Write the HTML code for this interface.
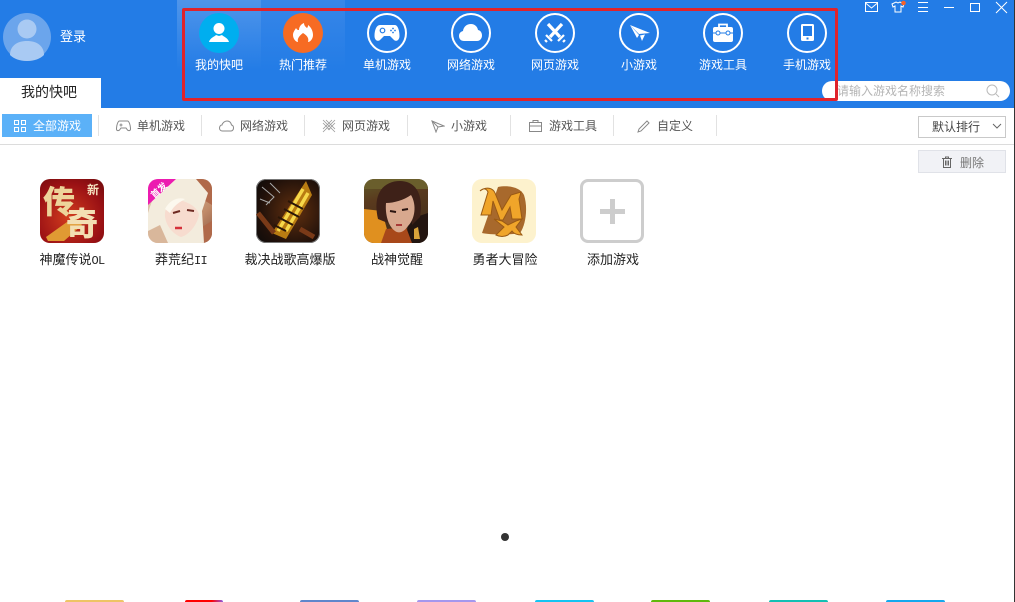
<!DOCTYPE html>
<html lang="zh"><head><meta charset="utf-8"><title>我的快吧</title>
<style>
html,body{margin:0;padding:0;width:1015px;height:602px;overflow:hidden;background:#fff}
body{position:relative;font-family:"Liberation Sans","Noto Sans CJK SC",sans-serif;font-size:12px}
.a{position:absolute}
.lb{position:absolute;top:57px;width:84px;text-align:center;color:#fff;font-size:12px;line-height:16px}
.c{position:absolute;top:13px;width:36px;height:36px;border:2px solid #fff;border-radius:50%}
.c svg{position:absolute;left:0;top:0}
.t{position:absolute;top:118px;font-size:12px;line-height:16px;color:#555}
.s{position:absolute;top:115px;width:1px;height:21px;background:#e2e2e2}
.i{position:absolute;top:118px}
.g{position:absolute;top:179px;width:64px;height:64px;border-radius:10px;overflow:hidden}
.n{position:absolute;top:251px;width:108px;text-align:center;font-size:13px;line-height:16px;color:#222;font-family:"WenQuanYi Zen Hei","Noto Sans CJK SC",sans-serif}
.n span{font-family:"Liberation Mono",monospace;font-size:12px;letter-spacing:-.7px}
.b{position:absolute;top:600px;height:2px;border-radius:3px 3px 0 0}
</style></head><body>
<div class="a" style="left:0;top:0;width:1015px;height:108px;background:#237ce6"></div>
<div class="a" style="left:177px;top:0;width:84px;height:70px;background:linear-gradient(#4f95ea,#237ce6)"></div>
<div class="a" style="left:261px;top:0;width:84px;height:70px;background:linear-gradient(#3786e8,#237ce6)"></div>

<!-- avatar -->
<svg class="a" style="left:3px;top:13px" width="48" height="48" viewBox="0 0 48 48"><circle cx="24" cy="24" r="24" fill="#6ba5ec"/><circle cx="24" cy="16" r="9.500" fill="#a9caf3"/><path d="M7 42c0-9 7-14 17-14s17 5 17 14c-4 4-10 6-17 6s-13-2-17-6z" fill="#a9caf3"/></svg>
<div class="a" style="left:60px;top:28px;color:#fff;font-size:13px;line-height:17px">登录</div>

<!-- tab -->
<div class="a" style="left:0;top:78px;width:101px;height:30px;background:#fff"></div>
<div class="a" style="left:21px;top:83px;font-size:14px;line-height:18px;color:#222">我的快吧</div>

<!-- nav icons -->
<div class="a" style="left:199px;top:13px;width:40px;height:40px;border-radius:50%;background:#00aeef"><svg width="40" height="40" viewBox="0 0 40 40"><circle cx="20" cy="15.500" r="5.500" fill="#fff"/><path d="M10 29c1-4 5-5 7-7l3 1 3-1c2 2 6 3 7 7z" fill="#fff"/></svg></div>
<div class="a" style="left:283px;top:13px;width:40px;height:40px;border-radius:50%;background:#f76b23"><svg width="40" height="40" viewBox="0 0 40 40"><path d="M21 10c0 3 2 4 3 5 1-1 1-2 1-3 3 2 5 6 5 10 0 4-3 7-5 7 1-3 0-6-5-9-4 3-6 6-5 9-2 0-5-3-5-7 0-3 2-5 3-7 1 2 2 2 3 2 0-3 2-6 5-7z" fill="#fff"/></svg></div>

<div class="c" style="left:367px"><svg width="36" height="36" viewBox="0 0 36 36"><path d="M11 10h15c2.500 0 4.500 5 4.500 11 0 4-3 6-5.500 4l-4-4h-6l-4 4c-2.500 2-5.500 0-5.500-4 0-6 2-11 5.500-11z" fill="#fff"/><circle cx="13.500" cy="15.500" r="2.300" fill="none" stroke="#237ce6" stroke-width="1.200"/><circle cx="24" cy="13.500" r=".9" fill="#237ce6"/><circle cx="24" cy="17.500" r=".9" fill="#237ce6"/><circle cx="22" cy="15.500" r=".9" fill="#237ce6"/><circle cx="26" cy="15.500" r=".9" fill="#237ce6"/></svg></div>
<div class="c" style="left:451px"><svg width="36" height="36" viewBox="0 0 36 36"><path d="M11 26c-3 0-5-2-5-5s2-4.500 4-5c.5-4 3.500-7 8-7 4 0 6.500 3 7 6 2.500.5 4 2.500 4 5.500s-2 5.500-5 5.500z" fill="#fff"/></svg></div>
<div class="c" style="left:535px"><svg width="36" height="36" viewBox="0 0 36 36"><path d="M11 9l12 13M25 9L13 22" stroke="#fff" stroke-width="3.200" fill="none"/><path d="M9 20l6 6M27 20l-6 6M8 25l2 2M28 25l-2 2" stroke="#fff" stroke-width="2.200"/></svg></div>
<div class="c" style="left:619px"><svg width="36" height="36" viewBox="0 0 36 36"><path d="M9 10l20 8-11 1z" fill="#fff"/><path d="M9 10l7 13 2-3z" fill="#fff"/><path d="M19 20.500l2 5.500 3-6.500z" fill="#fff"/></svg></div>
<div class="c" style="left:703px"><svg width="36" height="36" viewBox="0 0 36 36"><path d="M14 12V9.500h8V12" fill="none" stroke="#fff" stroke-width="1.800"/><rect x="8" y="12" width="20" height="15" rx="2" fill="#fff"/><path d="M8 18h20" stroke="#237ce6" stroke-width="1"/><circle cx="13" cy="18" r="2" fill="#fff" stroke="#237ce6"/><circle cx="23" cy="18" r="2" fill="#fff" stroke="#237ce6"/></svg></div>
<div class="c" style="left:787px"><svg width="36" height="36" viewBox="0 0 36 36"><rect x="12" y="9" width="13" height="17" rx="1.500" fill="#fff"/><rect x="14" y="11" width="9" height="10" fill="#237ce6"/><rect x="17.500" y="22.500" width="2" height="2" fill="#237ce6"/></svg></div>

<div class="lb" style="left:177px">我的快吧</div>
<div class="lb" style="left:261px">热门推荐</div>
<div class="lb" style="left:345px">单机游戏</div>
<div class="lb" style="left:429px">网络游戏</div>
<div class="lb" style="left:513px">网页游戏</div>
<div class="lb" style="left:597px">小游戏</div>
<div class="lb" style="left:681px">游戏工具</div>
<div class="lb" style="left:765px">手机游戏</div>

<!-- window controls -->
<svg class="a" style="left:860px;top:0" width="155" height="16" viewBox="0 0 155 16" fill="none" stroke="#fff" stroke-width="1">
<rect x="5.500" y="2.500" width="12" height="9"/><path d="M5.500 3l6 5 6-5"/>
<path d="M32 4l4-2 2 1 2-1 4 2-1 3-2-1v6h-6V6l-2 1z"/>
<circle cx="43.500" cy="3" r="2.300" fill="#f4622a" stroke="none"/>
<path d="M58 2.500h10M58 7.500h10M58 11.500h10"/>
<path d="M84 7.500h10"/>
<rect x="110.500" y="3.500" width="9" height="8"/>
<path d="M136 2l11 11M147 2l-11 11"/>
</svg>

<!-- search -->
<div class="a" style="left:822px;top:81px;width:188px;height:20px;border-radius:10px;background:#fff"></div>
<div class="a" style="left:837px;top:83px;color:#b5b5b5;font-size:12px;line-height:16px">请输入游戏名称搜索</div>
<svg class="a" style="left:986px;top:84px" width="14" height="14" viewBox="0 0 14 14" fill="none" stroke="#bbb"><circle cx="6" cy="6" r="5"/><path d="M10 10l3 3"/></svg>

<!-- red annotation -->
<div class="a" style="left:182px;top:8px;width:650px;height:87px;border:3px solid #e0232b;border-radius:2px"></div>

<!-- toolbar -->
<div class="a" style="left:2px;top:114px;width:90px;height:23px;background:#5bb1f8"></div>
<svg class="a" style="left:14px;top:120px" width="12" height="12" viewBox="0 0 12 12" fill="none" stroke="#fff"><rect x=".5" y=".5" width="4" height="4"/><rect x="7.500" y=".5" width="4" height="4"/><rect x=".5" y="7.500" width="4" height="4"/><rect x="7.500" y="7.500" width="4" height="4"/></svg>
<div class="t" style="left:33px;color:#fff">全部游戏</div>
<div class="s" style="left:98px"></div>
<svg class="i" style="left:116px;top:120px" width="15" height="12" viewBox="0 0 15 12" fill="none" stroke="#888"><path d="M3.500 1h8c1.500 0 3 4 3 8 0 2-2 2-3 1l-1.500-2H5L3.500 10c-1 1-3 1-3-1 0-4 1.500-8 3-8z"/><path d="M3.500 5h3M5 3.500v3"/></svg>
<div class="t" style="left:137px">单机游戏</div>
<div class="s" style="left:201px"></div>
<svg class="i" style="left:219px;top:120px" width="15" height="12" viewBox="0 0 15 12" fill="none" stroke="#888"><path d="M3.500 11C1.500 11 .5 9.500.5 8s1-3 2.500-3C3.500 3 5.500 1 8 1c2.500 0 4 1.500 4.500 4 1.200.2 2 1.500 2 3s-1 3-2.500 3z"/></svg>
<div class="t" style="left:240px">网络游戏</div>
<div class="s" style="left:304px"></div>
<svg class="i" style="left:322px;top:119px" width="14" height="14" viewBox="0 0 14 14" fill="none" stroke="#999" stroke-width=".8"><path d="M1 1l12 12M13 1L1 13M4 1l9 9M10 1L1 10M1 4l7 7M13 4l-7 7"/></svg>
<div class="t" style="left:342px">网页游戏</div>
<div class="s" style="left:407px"></div>
<svg class="i" style="left:431px;top:120px" width="14" height="13" viewBox="0 0 14 13" fill="none" stroke="#888"><path d="M1 1l12 5-6 1-2 5z"/><path d="M7 7L1 1"/></svg>
<div class="t" style="left:451px">小游戏</div>
<div class="s" style="left:510px"></div>
<svg class="i" style="left:529px;top:120px" width="13" height="12" viewBox="0 0 13 12" fill="none" stroke="#888"><rect x=".5" y="2.500" width="12" height="9"/><path d="M4 2.500V.5h5v2M.5 6h12"/></svg>
<div class="t" style="left:549px">游戏工具</div>
<div class="s" style="left:613px"></div>
<svg class="i" style="left:637px;top:120px" width="13" height="13" viewBox="0 0 13 13" fill="none" stroke="#888"><path d="M1 12l1-3 8-8 2 2-8 8z"/></svg>
<div class="t" style="left:657px">自定义</div>
<div class="s" style="left:716px"></div>

<div class="a" style="left:918px;top:116px;width:86px;height:20px;border:1px solid #c9c9c9;background:#fff"></div>
<div class="a" style="left:932px;top:119px;font-size:12px;line-height:16px;color:#444">默认排行</div>
<svg class="a" style="left:992px;top:123px" width="10" height="7" viewBox="0 0 10 7" fill="none" stroke="#666"><path d="M1 1l4 4 4-4"/></svg>
<div class="a" style="left:0;top:144px;width:1014px;height:1px;background:#dcdcdc"></div>

<div class="a" style="left:918px;top:150px;width:86px;height:21px;border:1px solid #e0e2e8;background:#f1f2f6"></div>
<svg class="a" style="left:941px;top:156px" width="12" height="12" viewBox="0 0 12 12" fill="none" stroke="#666"><path d="M1 2.500h10M4.500 2.500V1h3v1.500M2.500 2.500v9h7v-9M4.500 4.500v5M6 4.500v5M7.500 4.500v5"/></svg>
<div class="a" style="left:960px;top:155px;font-size:12px;line-height:16px;color:#777">删除</div>

<!-- game 1 -->
<div class="g" style="left:40px;background:radial-gradient(circle at 45% 60%,#d23c1e,#9a1114 65%,#6e0b0d)">
<svg width="64" height="64" viewBox="0 0 64 64">
<path d="M6 58L34 38l8 8-18 16H8z" fill="#e09a33"/>
<text x="3" y="34" font-size="32" font-weight="900" fill="#edd49a" font-family="Noto Sans CJK SC">传</text>
<text x="26" y="56" font-size="32" font-weight="900" fill="#f3dfb3" font-family="Noto Sans CJK SC">奇</text>
<text x="47" y="15" font-size="12" font-weight="700" fill="#f4e3c0" font-family="Noto Sans CJK SC">新</text>
</svg></div>
<div class="n" style="left:18px">神魔传说<span>OL</span></div>

<!-- game 2 -->
<div class="g" style="left:148px;background:linear-gradient(135deg,#e9dcc8,#c08a68 70%,#8a5540)">
<svg width="64" height="64" viewBox="0 0 64 64">
<path d="M48 0h16v26l-10-6zM44 54l20-12v22H44z" fill="#b0694a"/>
<path d="M18 0h30l12 14-6 18 2 32H0V34C4 20 10 8 18 0z" fill="#f3ecdd"/>
<path d="M17 34c1-9 9-15 18-12 9 3 15 8 16 14-2 10-10 20-18 22-9-3-17-14-16-24z" fill="#f7dccf"/>
<path d="M17 30c5-9 12-12 20-10-5 3-11 6-15 14z" fill="#fcf8ee"/>
<path d="M25 34l7-2M39 31l7 1" stroke="#6e2a22" stroke-width="2"/>
<path d="M27 49h7" stroke="#d5303a" stroke-width="2.500"/>
<path d="M0 52l12-6 8 18H0z" fill="#d9b79b"/>
<path d="M0 0h28L0 26z" fill="#ec1bb0"/>
<text x="3" y="17" font-size="9" font-weight="700" fill="#fff" font-family="Noto Sans CJK SC" transform="rotate(-42 8 14)">首发</text>
</svg></div>
<div class="n" style="left:127px">莽荒纪<span>II</span></div>

<!-- game 3 -->
<div class="g" style="left:256px;background:radial-gradient(circle at 60% 50%,#62300f,#1f100a 70%,#0c0b0b);box-shadow:inset 0 0 0 1px #777">
<svg width="64" height="64" viewBox="0 0 64 64">
<path d="M50 2l6 14-26 44-14-6z" fill="#b97c12"/>
<path d="M47 10L22 52M52 14L30 52" stroke="#f7d84a" stroke-width="3.500"/>
<path d="M32 22l15 8M28 30l15 8M22 38l15 8M18 46l12 6" stroke="#2a1608" stroke-width="2"/>
<path d="M6 8l12 10-8 8M14 4l10 10M4 20l10 4" stroke="#aaa" stroke-width="1" fill="none"/>
<path d="M2 34l16 20M44 50l14 8" stroke="#7a3a18" stroke-width="5"/>
</svg></div>
<div class="n" style="left:236px">裁决战歌高爆版</div>

<!-- game 4 -->
<div class="g" style="left:364px;background:linear-gradient(165deg,#5f5a28,#5a3a1e 30%,#3b2a18)">
<svg width="64" height="64" viewBox="0 0 64 64">
<path d="M0 0h64v10H0z" fill="#6a5e2c"/>
<path d="M0 30l18 2 6 22-4 10H0z" fill="#e0901f"/>
<path d="M46 40l18-6v30H40z" fill="#231510"/>
<path d="M50 50l4-2 2 12h-6z" fill="#d9a23a"/>
<path d="M17 64l5-14 20-2 6 16z" fill="#a8481a"/>
<path d="M14 40C8 14 20 2 36 2c16 0 24 14 20 36l-8 8-2-22-24 2 2 18z" fill="#3e2118"/>
<path d="M22 24c8 0 18-3 25-8 6 10 4 24-3 31-4 6-9 8-13 5-7-5-10-17-9-28z" fill="#d8a88e"/>
<path d="M26 32l6 1M38 31l6-1" stroke="#2a1510" stroke-width="2"/>
<path d="M32 46h6" stroke="#a83a38" stroke-width="2"/>
</svg></div>
<div class="n" style="left:343px">战神觉醒</div>

<!-- game 5 -->
<div class="g" style="left:472px;background:#fdf2cd">
<svg width="64" height="64" viewBox="0 0 64 64">
<path d="M26 8c10-2 22 0 26 8 4 12 2 30-4 38-8 2-30 2-38 0z" fill="#a8692c"/>
<path d="M8 12c6-5 13-3 15 2l7 17 9-15 10-3-2 7 3 20h-10l-2-12-7 13h-3l-7-19-2 14H9l7-23c-2-4-5-4-8-1z" fill="#f0a52a" stroke="#9a5a14" stroke-width="1"/>
<path d="M22 40l8 2 6 4 8-4 6-2-6 8 6 8c-4 0-8-1-10-4l-4 4c-4 2-8 2-12 0l8-8z" fill="#f0a52a" stroke="#9a5a14" stroke-width="1"/>
</svg></div>
<div class="n" style="left:451px">勇者大冒险</div>

<!-- add -->
<div class="g" style="left:580px;width:58px;height:58px;border:3px solid #cdcdcd;border-radius:8px;background:#fff">
<div class="a" style="left:17px;top:26.500px;width:25px;height:5px;background:#cdcdcd"></div>
<div class="a" style="left:27px;top:16.500px;width:5px;height:25px;background:#cdcdcd"></div>
</div>
<div class="n" style="left:559px">添加游戏</div>

<!-- pager -->
<div class="a" style="left:501px;top:533px;width:8px;height:8px;border-radius:50%;background:#333"></div>

<!-- bottom row -->
<div class="b" style="left:65px;width:59px;background:#eec465"></div>
<div class="b" style="left:185px;width:38px;background:linear-gradient(90deg,#f00 70%,#8d5ae0)"></div>
<div class="b" style="left:300px;width:59px;background:#5f86cc"></div>
<div class="b" style="left:417px;width:59px;background:#a597ee"></div>
<div class="b" style="left:535px;width:59px;background:#14c4f2"></div>
<div class="b" style="left:651px;width:59px;background:#5fb90c"></div>
<div class="b" style="left:769px;width:59px;background:#12c0b4"></div>
<div class="b" style="left:886px;width:59px;background:#14a8ee"></div>

<div class="a" style="left:1014px;top:0;width:1px;height:602px;background:#333"></div>
</body></html>
